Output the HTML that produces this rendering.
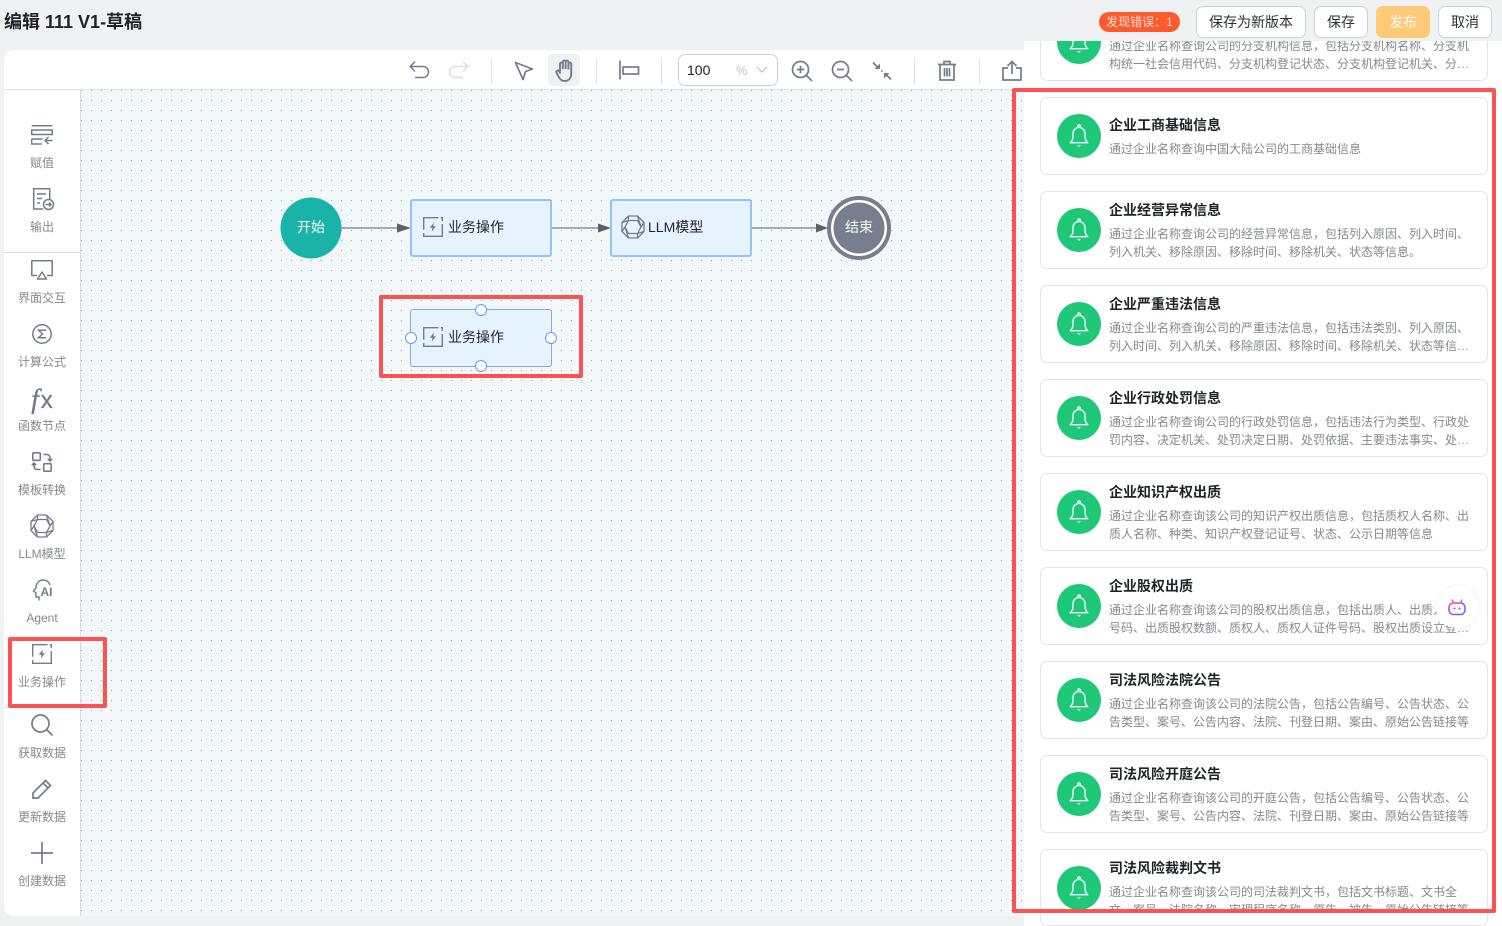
<!DOCTYPE html>
<html lang="zh"><head><meta charset="utf-8"><title>编辑</title>
<style>
html,body{margin:0;padding:0}
body{width:1502px;height:926px;position:relative;overflow:hidden;background:#f0f1f3;font-family:"Liberation Sans","Noto Sans CJK SC",sans-serif;color:#1f2329}
.a{position:absolute}
.btn{position:absolute;top:6px;height:32px;box-sizing:border-box;border:1px solid #cdd1d9;border-radius:7px;background:#fff;font-size:14px;line-height:30px;text-align:center;color:#2b2f36}
.lbl{position:absolute;left:4px;width:76px;text-align:center;font-size:12px;line-height:16px;color:#85888e;white-space:nowrap}
.ic{position:absolute;fill:none;stroke:#747c8c;stroke-width:1.5;overflow:visible}
.div{position:absolute;top:58px;width:1px;height:26px;background:#dfe1e6}
.node{position:absolute;width:142px;height:58px;box-sizing:border-box;background:#e6f2fe;border:2px solid #93c3fc;border-radius:3px}
.nt{position:absolute;font-size:14px;line-height:20px;color:#1f2329;white-space:nowrap}
.h{position:absolute;width:12px;height:12px;box-sizing:border-box;border-radius:50%;background:#fff;border:1px solid #5c9df2}
.card{position:absolute;left:16px;width:448px;height:78px;box-sizing:border-box;border:1px solid #e2e4ea;border-radius:7px;background:#fff}
.bell{position:absolute;left:16px;top:16px;width:44px;height:44px}
.t{position:absolute;left:68px;top:8px;font-size:14px;line-height:20px;font-weight:bold;color:#1f2329;white-space:nowrap}
.d{position:absolute;left:68px;font-size:12px;line-height:18px;color:#85888e;white-space:nowrap}
.d1{top:33px}.d2{top:51px}
.red{position:absolute;box-sizing:border-box;border:4px solid #fd5252;border-radius:2px;pointer-events:none}
</style></head><body>
<svg width="0" height="0" style="position:absolute">
<defs>
<symbol id="bell" viewBox="0 0 44 44"><circle cx="22" cy="22" r="22" fill="#1fc778"/><g fill="none" stroke="#fff" stroke-width="1.300"><path d="M13.200 28.700c1.800-1.500 2.800-3.700 2.800-6.200v-3a6 6 0 0 1 12 0v3c0 2.500 1 4.700 2.800 6.200z" stroke-linejoin="round"/><circle cx="22" cy="12.200" r="1.300"/></g><path d="M20 31.300h4l-2 1.500z" fill="#fff"/></symbol>
<symbol id="biz" viewBox="0 0 20 20"><g fill="none" stroke="#747c8c" stroke-width="1.400"><path d="M15.500.7H.7v12M.7 16v3.300H19.300V7M19.300 4V.7h-1.500"/></g><path d="M10.900 5.500L6.800 10.700h2.600L8.800 14.500l4.200-5.300h-2.600z" fill="#747c8c"/></symbol>
<symbol id="llm" viewBox="0 0 24 24"><g fill="none" stroke="#747c8c" stroke-width="1.300" stroke-linejoin="round"><path d="M7.500 1h9L23 7.500v9L16.500 23h-9L1 16.500v-9z"/><path d="M7.500 5.500h9l3.500 6.500-3.500 6.500h-9L4 12z"/><path d="M7.500 1v4.500L1 7.500M16.500 1l3.500 11L23 7.500M23 16.500l-6.500 2V23M7.500 23l-3.500-11-3 4.500"/></g></symbol>
</defs></svg>

<!-- header -->
<div class="a" style="left:4px;top:10px;font-size:18px;line-height:25px;font-weight:bold;white-space:nowrap">编辑 111 V1-草稿</div>

<!-- main panel -->
<div class="a" style="left:4px;top:50px;width:1100px;height:866px;background:#fff;border-radius:10px 10px 0 10px;overflow:hidden"></div>
<div class="a" style="left:4px;top:89px;width:1020px;height:1px;background:#dfe2e8"></div>
<div class="a" style="left:80px;top:90px;width:1px;height:826px;background:#d9dde6"></div>
<div class="a" style="left:81px;top:90px;width:943px;height:826px;background-color:#f2f7fa;background-image:radial-gradient(circle at .5px .5px,#9ea3a8 .65px,transparent .8px);background-size:10px 10px"></div>
<div class="a" style="left:4px;top:252px;width:76px;height:1px;background:#dfe2e8"></div>
<div class="a" style="left:4px;top:707px;width:76px;height:1px;background:#dfe2e8"></div>

<!-- toolbar -->
<svg class="ic" style="left:409px;top:60px" width="20" height="20" viewBox="0 0 20 20"><path d="M1.500 6.500H14a5 5 0 0 1 0 11H6M6 1.500L1.200 6.500 6 11.500"/></svg>
<svg class="ic" style="left:449px;top:60px;stroke:#dcdee3" width="20" height="20" viewBox="0 0 20 20"><path d="M18.500 6.500H6a5 5 0 0 0 0 11h8M14 1.500l4.800 5-4.800 5"/></svg>
<div class="div" style="left:491px"></div>
<svg class="ic" style="left:513px;top:60px;stroke-width:1.700" width="22" height="22" viewBox="0 0 22 22"><path d="M2.500 2.500L19.500 9l-7 2.500-2.500 8z" stroke-linejoin="round"/></svg>
<div class="a" style="left:548px;top:54px;width:32px;height:32px;background:#f0f1f3;border-radius:4px"></div>
<svg class="ic" style="left:554px;top:59px;stroke-width:1.900" width="23" height="23" viewBox="0 0 23 23"><path d="M6 12.500V5a1.400 1.400 0 0 1 2.800 0v5M8.800 10V2.800a1.400 1.400 0 0 1 2.800 0V10M11.600 10V3a1.400 1.400 0 0 1 2.800 0v7M14.400 10.500V5a1.400 1.400 0 0 1 2.800 0v10c0 4-2.500 7-6.500 7-3.500 0-5-2-6.200-4.500L2.500 13.500c-.7-1.500 1.700-2.800 2.700-1.200L6.500 14.500"/></svg>
<div class="div" style="left:596px"></div>
<svg class="ic" style="left:619px;top:60px;stroke-width:1.700" width="20" height="20" viewBox="0 0 20 20"><path d="M1 .5v19"/><rect x="4" y="7" width="15.500" height="7"/></svg>
<div class="div" style="left:661px"></div>
<div class="a" style="left:678px;top:54px;width:100px;height:32px;box-sizing:border-box;border:1px solid #cdd1d9;border-radius:7px;background:#fff"></div>
<div class="a" style="left:687px;top:61px;font-size:14px;line-height:18px;color:#1f2329">100</div>
<div class="a" style="left:736px;top:62px;font-size:13px;line-height:17px;color:#c0c3c9">%</div>
<svg class="ic" style="left:756px;top:66px;stroke:#c0c3c9;stroke-width:1.200" width="12" height="8" viewBox="0 0 12 8"><path d="M1 1l5 5 5-5"/></svg>
<svg class="ic" style="left:791px;top:60px;stroke-width:1.700" width="22" height="22" viewBox="0 0 22 22"><circle cx="9.500" cy="9.500" r="8"/><path d="M15.500 15.500l5.500 5.500M5.800 9.500h7.400M9.500 5.800v7.400"/></svg>
<svg class="ic" style="left:831px;top:60px;stroke-width:1.700" width="22" height="22" viewBox="0 0 22 22"><circle cx="9.500" cy="9.500" r="8"/><path d="M15.500 15.500l5.500 5.500M6 9.500h7"/></svg>
<svg class="a" style="left:872px;top:61px" width="20" height="20" viewBox="0 0 20 20"><path d="M1 1.500l5 5" stroke="#747c8c" stroke-width="1.700"/><path d="M8 8V2.500L2.500 8z" fill="#747c8c"/><path d="M19 18.500l-5-5" stroke="#747c8c" stroke-width="1.700"/><path d="M12 12v5.500l5.500-5.500z" fill="#747c8c"/><rect x="9.200" y="9.200" width="1.600" height="1.600" fill="#747c8c"/></svg>
<div class="div" style="left:914px"></div>
<svg class="ic" style="left:937px;top:60px;stroke-width:1.700" width="20" height="21" viewBox="0 0 20 21"><path d="M1 4.500h18M7 4.500V1.500h6v3M3 4.500V20h14V4.500M7.500 8v8.500M10 8v8.500M12.500 8v8.500"/></svg>
<div class="div" style="left:979px"></div>
<svg class="ic" style="left:1002px;top:60px;stroke-width:1.700" width="20" height="21" viewBox="0 0 20 21"><path d="M6 8H1v12h18V8h-5M10 14V1.500M5.500 6L10 1.500 14.500 6"/></svg>

<!-- sidebar -->
<svg class="ic" style="left:31px;top:125px" width="22" height="20" viewBox="0 0 22 20"><path d="M.7.700h20.600M.7 5h20.600v4.500H.7zM.7 9.500V5M.7 14h11M.7 14v5h10M14 15.500h7.500M17.500 12l-3.500 3.500 3.500 3.500"/></svg>
<div class="lbl" style="top:155px">赋值</div>
<svg class="ic" style="left:33px;top:188px" width="22" height="23" viewBox="0 0 22 23"><path d="M10 21H.7V.7h16v11M4 6h9M4 10.500h5M4 15h3"/><circle cx="15.500" cy="16.500" r="5"/><path d="M12.500 16.500h5.500M16 14.500l2 2-2 2"/></svg>
<div class="lbl" style="top:219px">输出</div>
<svg class="ic" style="left:31px;top:260px" width="22" height="20" viewBox="0 0 22 20"><path d="M6 15.500H.8V.8h20.400v14.700H16M11 12l-4.500 7h9z" stroke-linejoin="round"/></svg>
<div class="lbl" style="top:290px">界面交互</div>
<svg class="ic" style="left:32px;top:324px" width="20" height="20" viewBox="0 0 20 20"><circle cx="10" cy="10" r="9.200"/><path d="M14 6.300H6.500l4 3.700-4 3.700H14"/></svg>
<div class="lbl" style="top:354px">计算公式</div>
<div class="a" style="left:4px;top:384px;width:76px;text-align:center;line-height:30px;color:#747c8c;white-space:nowrap"><span style="font-family:'Liberation Serif',serif;font-style:italic;font-size:27px;-webkit-text-stroke:.4px #747c8c">f</span><span style="font-size:24px;-webkit-text-stroke:.3px #747c8c;margin-left:2px">x</span></div>
<div class="lbl" style="top:418px">函数节点</div>
<svg class="ic" style="left:32px;top:452px;stroke-width:1.600" width="20" height="20" viewBox="0 0 20 20"><rect x=".8" y=".8" width="7.500" height="7.500" rx="1"/><rect x="11.700" y="11.700" width="7.500" height="7.500" rx="1"/><path d="M11.500 2.500h3.500a3 3 0 0 1 3 3V9M15.800 6.800L18 9l2.200-2.200M8.500 17.500H5a3 3 0 0 1-3-3V11M4.200 13.200L2 11l-2.200 2.200"/></svg>
<div class="lbl" style="top:482px">模板转换</div>
<svg style="position:absolute;left:30px;top:514px" width="24" height="24"><use href="#llm"/></svg>
<div class="lbl" style="top:546px">LLM模型</div>
<svg class="ic" style="left:32px;top:579px;stroke-width:1.400" width="21" height="23" viewBox="0 0 21 23"><path d="M7 21.500v-3.500H4v-4L1.500 12 4 9C3.800 4.500 7 1 11 1c3.500 0 6 2 7 5"/><text x="8.500" y="17" font-family="Liberation Sans" font-size="12" font-weight="bold" fill="#747c8c" stroke="none">AI</text></svg>
<div class="lbl" style="top:610px">Agent</div>
<svg style="position:absolute;left:32px;top:644px" width="20" height="20"><use href="#biz"/></svg>
<div class="lbl" style="top:674px">业务操作</div>
<svg class="ic" style="left:31px;top:714px;stroke-width:1.700" width="22" height="22" viewBox="0 0 22 22"><circle cx="9.500" cy="9.500" r="8.500"/><path d="M15.500 15.500l6 6"/></svg>
<div class="lbl" style="top:745px">获取数据</div>
<svg class="ic" style="left:32px;top:779px;stroke-width:1.700" width="20" height="20" viewBox="0 0 20 20"><path d="M1 19v-5L13.500 1.500l5 5L6 19zM11 4l5 5"/></svg>
<div class="lbl" style="top:809px">更新数据</div>
<svg class="ic" style="left:31px;top:842px;stroke-width:1.700" width="22" height="22" viewBox="0 0 22 22"><path d="M0 11h22M11 0v22"/></svg>
<div class="lbl" style="top:873px">创建数据</div>

<!-- flow -->
<svg class="a" style="left:0;top:0" width="1024" height="300">
<g stroke="#8a8f99" stroke-width="1.500"><path d="M341 228h57M552 228h47M752 228h65"/></g>
<g fill="#5b6069"><path d="M397 223.500l14 4.500-14 4.500zM598 223.500l13 4.500-13 4.500zM816 223.500l12 4.500-12 4.500z"/></g>
<circle cx="311" cy="228" r="30.500" fill="#1ab3aa"/>
<circle cx="859" cy="228" r="30" fill="#fff" stroke="#777e8e" stroke-width="4"/>
<circle cx="859" cy="228" r="25.500" fill="#777e8e"/>
</svg>
<div class="nt" style="left:297px;top:217px;color:#fff">开始</div>
<div class="nt" style="left:845px;top:217px;color:#fff">结束</div>
<div class="node" style="left:410px;top:199px"></div>
<svg style="position:absolute;left:423px;top:217px" width="20" height="20"><use href="#biz"/></svg>
<div class="nt" style="left:448px;top:217px">业务操作</div>
<div class="node" style="left:610px;top:199px"></div>
<svg style="position:absolute;left:621px;top:215px" width="24" height="24"><use href="#llm"/></svg>
<div class="nt" style="left:648px;top:217px">LLM模型</div>
<div class="node" style="left:410px;top:309px;border:1px solid #8fa4e0"></div>
<svg style="position:absolute;left:423px;top:327px" width="20" height="20"><use href="#biz"/></svg>
<div class="nt" style="left:448px;top:327px">业务操作</div>
<div class="h" style="left:475px;top:304px"></div>
<div class="h" style="left:475px;top:360px"></div>
<div class="h" style="left:405px;top:332px"></div>
<div class="h" style="left:545px;top:332px"></div>

<!-- right panel -->
<div class="a" style="left:1024px;top:41px;width:478px;height:885px;background:#fff;overflow:hidden">
<div class="card" style="top:-38px"><svg class="bell"><use href="#bell"/></svg><div class="t">企业分支机构信息</div><div class="d d1">通过企业名称查询公司的分支机构信息，包括分支机构名称、分支机</div><div class="d d2">构统一社会信用代码、分支机构登记状态、分支机构登记机关、分…</div></div>
<div class="card" style="top:56px"><svg class="bell"><use href="#bell"/></svg><div class="t" style="top:17px">企业工商基础信息</div><div class="d" style="top:42px">通过企业名称查询中国大陆公司的工商基础信息</div></div>
<div class="card" style="top:150px"><svg class="bell"><use href="#bell"/></svg><div class="t">企业经营异常信息</div><div class="d d1">通过企业名称查询公司的经营异常信息，包括列入原因、列入时间、</div><div class="d d2">列入机关、移除原因、移除时间、移除机关、状态等信息。</div></div>
<div class="card" style="top:244px"><svg class="bell"><use href="#bell"/></svg><div class="t">企业严重违法信息</div><div class="d d1">通过企业名称查询公司的严重违法信息，包括违法类别、列入原因、</div><div class="d d2">列入时间、列入机关、移除原因、移除时间、移除机关、状态等信…</div></div>
<div class="card" style="top:338px"><svg class="bell"><use href="#bell"/></svg><div class="t">企业行政处罚信息</div><div class="d d1">通过企业名称查询公司的行政处罚信息，包括违法行为类型、行政处</div><div class="d d2">罚内容、决定机关、处罚决定日期、处罚依据、主要违法事实、处…</div></div>
<div class="card" style="top:432px"><svg class="bell"><use href="#bell"/></svg><div class="t">企业知识产权出质</div><div class="d d1">通过企业名称查询该公司的知识产权出质信息，包括质权人名称、出</div><div class="d d2">质人名称、种类、知识产权登记证号、状态、公示日期等信息</div></div>
<div class="card" style="top:526px"><svg class="bell"><use href="#bell"/></svg><div class="t">企业股权出质</div><div class="d d1">通过企业名称查询该公司的股权出质信息，包括出质人、出质人证件</div><div class="d d2">号码、出质股权数额、质权人、质权人证件号码、股权出质设立登…</div></div>
<div class="card" style="top:620px"><svg class="bell"><use href="#bell"/></svg><div class="t">司法风险法院公告</div><div class="d d1">通过企业名称查询该公司的法院公告，包括公告编号、公告状态、公</div><div class="d d2">告类型、案号、公告内容、法院、刊登日期、案由、原始公告链接等</div></div>
<div class="card" style="top:714px"><svg class="bell"><use href="#bell"/></svg><div class="t">司法风险开庭公告</div><div class="d d1">通过企业名称查询该公司的开庭公告，包括公告编号、公告状态、公</div><div class="d d2">告类型、案号、公告内容、法院、刊登日期、案由、原始公告链接等</div></div>
<div class="card" style="top:808px"><svg class="bell"><use href="#bell"/></svg><div class="t">司法风险裁判文书</div><div class="d d1">通过企业名称查询该公司的司法裁判文书，包括文书标题、文书全</div><div class="d d2">文、案号、法院名称、审理程序名称、原告、被告、原始公告链接等</div></div>
</div>
<div class="a" style="left:1024px;top:913px;width:478px;height:13px;background:#fff"></div>
<div class="card" style="left:1040px;top:913px;height:13px;border-top:0;border-radius:0 0 7px 7px"></div>

<!-- header buttons -->
<div class="a" style="left:1099px;top:12px;width:81px;height:20px;border-radius:10px;background:#fd5a2d;color:#ffe3da;font-size:12px;line-height:20px;text-align:center;white-space:nowrap">发现错误：1</div>
<div class="btn" style="left:1196px;width:110px">保存为新版本</div>
<div class="btn" style="left:1314px;width:54px">保存</div>
<div class="btn" style="left:1376px;width:54px;background:#fec978;border-color:#fec978;color:#fff">发布</div>
<div class="btn" style="left:1438px;width:54px">取消</div>

<!-- float bot -->
<div class="a" style="left:1436px;top:586px;width:42px;height:42px;border-radius:50%;background:#fff;box-shadow:0 0 6px rgba(0,0,0,.07)"></div>
<svg class="a" style="left:1447px;top:598px" width="20" height="18" viewBox="0 0 20 18"><defs><linearGradient id="g" x1="0" y1="0" x2="1" y2="1"><stop offset="0" stop-color="#ee4fa0"/><stop offset=".55" stop-color="#a050f0"/><stop offset="1" stop-color="#3f7bff"/></linearGradient></defs><rect x="2" y="5" width="16" height="11.500" rx="4.500" fill="#fff" stroke="url(#g)" stroke-width="1.600"/><path d="M5 1.500l1.500 3.500M15 1.500L13.500 5" stroke="#ee4fa0" stroke-width="1.400" fill="none"/><circle cx="7.500" cy="10.500" r="1" fill="#7a5cf0"/><circle cx="12.500" cy="10.500" r="1" fill="#7a5cf0"/></svg>

<!-- red annotations -->
<div class="red" style="left:1012px;top:88px;width:484px;height:825px"></div>
<div class="red" style="left:379px;top:295px;width:204px;height:83px"></div>
<div class="red" style="left:8px;top:637px;width:99px;height:71px"></div>
</body></html>
